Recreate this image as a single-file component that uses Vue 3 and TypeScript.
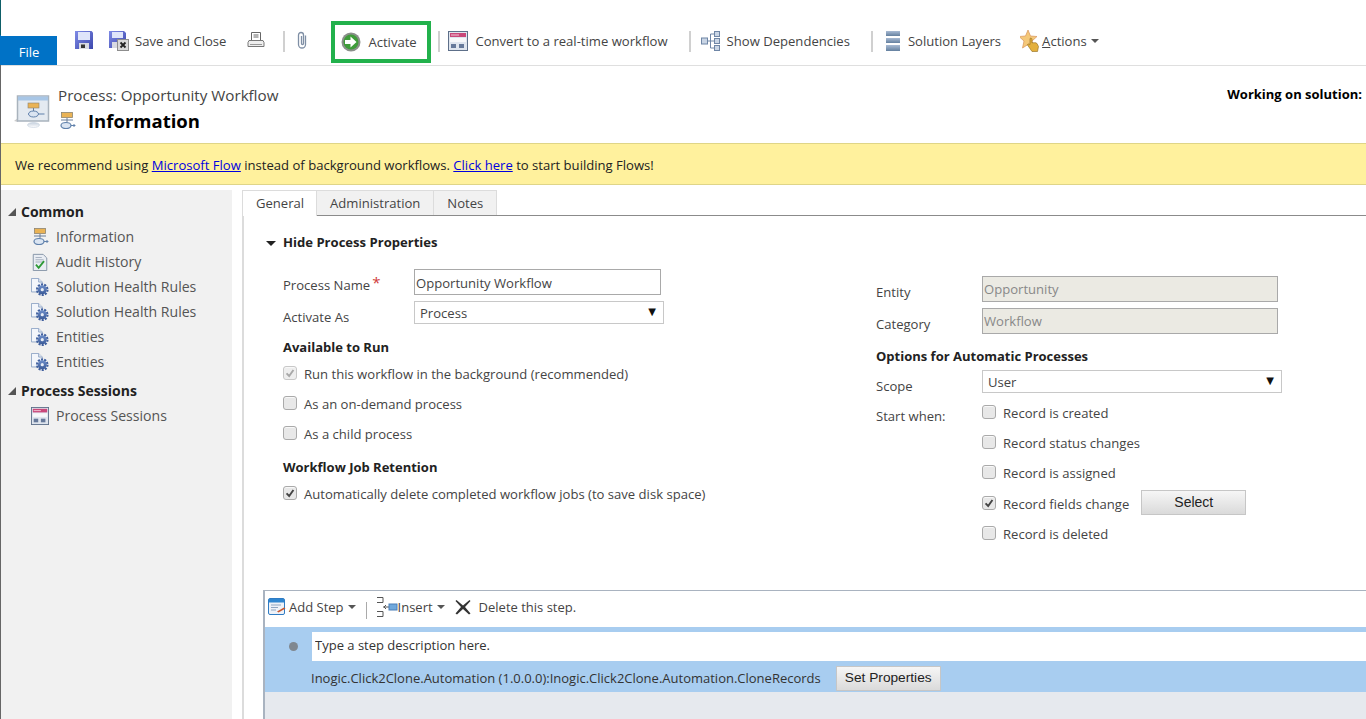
<template>
  <div class="app">
    <svg class="defs" aria-hidden="true">
      <defs>
        <linearGradient id="floppy" x1="0" y1="0" x2="1" y2="1">
          <stop offset="0" stop-color="#7f8be6" />
          <stop offset="1" stop-color="#3c47ad" />
        </linearGradient>
        <linearGradient id="bar" x1="0" y1="0" x2="0" y2="1">
          <stop offset="0" stop-color="#a9bbd4" />
          <stop offset="1" stop-color="#64809f" />
        </linearGradient>
        <linearGradient id="gearfill" x1="0" y1="0" x2="0" y2="1">
          <stop offset="0" stop-color="#6f8fca" />
          <stop offset="1" stop-color="#3a5a98" />
        </linearGradient>
        <linearGradient id="fade" x1="0" y1="0" x2="0" y2="1">
          <stop offset="0" stop-color="#c5d0dd" />
          <stop offset="1" stop-color="#fff" />
        </linearGradient>
        <symbol id="i-save" viewBox="0 0 18 18">
          <path d="M0 0h16.500L18 1.500V18H0z" fill="url(#floppy)" />
          <rect x="3" y="1" width="12" height="8" fill="#dfe5fa" />
          <rect x="4" y="12" width="10" height="6" fill="#d8dae2" />
          <rect x="6" y="13.500" width="4" height="3.500" fill="#333" />
        </symbol>
        <symbol id="i-saveclose" viewBox="0 0 20 20">
          <path d="M0 0h15l2 2v15H0z" fill="url(#floppy)" />
          <rect x="3" y="1" width="11" height="6" fill="#dfe5fa" />
          <rect x="3" y="11" width="7" height="6" fill="#d8dae2" />
          <rect x="8.500" y="8.500" width="11" height="11" fill="#d9d9d9" stroke="#8d8d8d" />
          <path d="M11.500 11.500l5 5M16.500 11.500l-5 5" stroke="#222" stroke-width="1.800" />
        </symbol>
        <symbol id="i-print" viewBox="0 0 18 18">
          <path d="M4.500 1.500h9v8h-9z" fill="#fff" stroke="#666" />
          <path d="M6.500 4h5M6.500 6h5" stroke="#666" />
          <path d="M2 9.500h14l1 2v4H1v-4z" fill="#eee" stroke="#777" />
          <path d="M3 13.500h12" stroke="#999" />
        </symbol>
        <symbol id="i-clip" viewBox="0 0 12 18">
          <path d="M9.500 4.500v9a3.500 3.500 0 0 1-7 0V4a2.500 2.500 0 0 1 5 0v8.500a1 1 0 0 1-2 0V5" fill="none" stroke="#7f8fa5" stroke-width="1.300" />
        </symbol>
        <symbol id="i-activate" viewBox="0 0 20 20">
          <circle cx="10" cy="10" r="9.500" fill="#8a8f8a" />
          <circle cx="10" cy="10" r="7.500" fill="#3f9c3a" />
          <path d="M4 8h5.500V4.500L15.500 10l-6 5.500V12H4z" fill="#fff" />
        </symbol>
        <symbol id="i-form" viewBox="0 0 20 20">
          <rect x=".5" y=".5" width="19" height="19" fill="#dfe5ee" stroke="#5d6f89" />
          <rect x="2" y="2" width="16" height="4" fill="#c9487a" />
          <path d="M3 4h8" stroke="#f2c7d6" />
          <rect x="2" y="7" width="16" height="4" fill="#f7f8fa" />
          <rect x="3" y="13" width="5" height="4" fill="#66799a" />
          <rect x="11" y="13" width="5" height="4" fill="#66799a" />
        </symbol>
        <symbol id="i-deps" viewBox="0 0 20 20">
          <g fill="#c9d5e5" stroke="#6f86a6">
            <rect x=".5" y="7" width="6" height="6" />
            <rect x="13.500" y=".5" width="5" height="5" />
            <rect x="13.500" y="7.500" width="5" height="5" />
            <rect x="13.500" y="14.500" width="5" height="5" />
          </g>
          <path d="M6.500 10h7M9.500 3v14M9.500 3h4M9.500 17h4" fill="none" stroke="#6f86a6" />
        </symbol>
        <symbol id="i-layers" viewBox="0 0 14 20">
          <rect width="14" height="5" fill="url(#bar)" />
          <rect y="7" width="14" height="5" fill="url(#bar)" />
          <rect y="14" width="14" height="6" fill="url(#bar)" />
        </symbol>
        <symbol id="i-actions" viewBox="0 0 22 22">
          <path d="M8 0l2.500 6 6.500.5-5 4.500 1.500 7L8 14.500 2.500 18 4 11-1 6.500 5.500 6z" fill="#f4c879" stroke="#d9935a" stroke-width=".7" />
          <path d="M10 8.500c1-1 2 0 2 1V13l1-.5 1 .5 1-.5 2 1 1.500 3-1 5H12l-4.500-6.500c0-1 1-1.500 2.500-.5z" fill="#e3b03d" stroke="#8e6a1d" stroke-width=".6" />
        </symbol>
        <symbol id="i-process" viewBox="0 0 18 18">
          <rect x="3.500" y=".5" width="11" height="5" fill="#eab355" stroke="#8d8471" stroke-width=".8" />
          <path d="M9 6v4M3 8h12" stroke="#6b7f99" />
          <ellipse cx="8" cy="13.500" rx="5" ry="3" fill="#dbe5f2" stroke="#5f80ab" stroke-width="1.200" />
          <path d="M13 13.500h4M15.500 12l1.500 1.500-1.500 1.500" fill="none" stroke="#5f80ab" />
        </symbol>
        <symbol id="i-audit" viewBox="0 0 16 20">
          <path d="M.5 1.500h11l4 4v14H.5z" fill="#e9edf3" stroke="#7f8ea3" />
          <path d="M3 5h7M3 7.500h9M3 10h9" stroke="#a2adbc" />
          <path d="M3.500 13l3 3.500 6-7.500" fill="none" stroke="#2d9a35" stroke-width="2" />
        </symbol>
        <symbol id="i-gear" viewBox="0 0 20 20">
          <path d="M.5.500h8l4 4v11H.5z" fill="#f3f6fb" stroke="#8ca3c4" />
          <path d="M8.500.500v4h4" fill="#dfe6f1" stroke="#8ca3c4" />
          <circle cx="12.500" cy="13" r="5.800" fill="none" stroke="#3f5f9e" stroke-width="2.400" stroke-dasharray="2.300 1.300" />
          <circle cx="12.500" cy="13" r="5" fill="url(#gearfill)" />
          <circle cx="12.500" cy="13" r="1.800" fill="#e7ecf5" />
        </symbol>
        <symbol id="i-addstep" viewBox="0 0 18 18">
          <rect x=".5" y=".5" width="16" height="16" rx="1.500" fill="#eef2f8" stroke="#2f7cc4" />
          <rect x="1" y="1" width="15" height="3.500" fill="#2f86d0" />
          <path d="M3 7h10M3 9.500h7M3 12h5" stroke="#8fa6c2" />
          <path d="M9 13.500l7-4 1.500 1-7 4z" fill="#c9562c" />
        </symbol>
        <symbol id="i-insert" viewBox="0 0 22 22">
          <path d="M1 1.500h6v5H1M1 15.500h6v5H1" fill="none" stroke="#555" />
          <path d="M7 11h6M10 9l-2 2 2 2" fill="none" stroke="#555" />
          <rect x="13" y="8" width="8" height="6" fill="#6fa8dc" stroke="#4b7fb8" />
        </symbol>
        <symbol id="i-delete" viewBox="0 0 16 16">
          <path d="M1.500 1l6.500 5.500L14.500 1l1 1L10 8l5.500 6.500-1.500 1L8 10l-6 5.500-1.500-1L6 8 .5 2z" fill="#333" />
        </symbol>
      </defs>
    </svg>

    <header class="ribbon">
      <div class="file-tab">File</div>
      <div class="tools">
        <svg class="ic save"><use href="#i-save" /></svg>
        <div class="tool saveclose"><svg class="ic s20"><use href="#i-saveclose" /></svg><span>Save and Close</span></div>
        <svg class="ic print"><use href="#i-print" /></svg>
        <span class="sep sep-a"></span>
        <svg class="ic clip"><use href="#i-clip" /></svg>
        <div class="tool activate"><svg class="ic s20"><use href="#i-activate" /></svg><span>Activate</span></div>
        <span class="sep sep-b"></span>
        <div class="tool convert"><svg class="ic s20"><use href="#i-form" /></svg><span>Convert to a real-time workflow</span></div>
        <span class="sep sep-c"></span>
        <div class="tool deps"><svg class="ic s20"><use href="#i-deps" /></svg><span>Show Dependencies</span></div>
        <span class="sep sep-d"></span>
        <div class="tool layers"><svg class="ic layer-ic"><use href="#i-layers" /></svg><span>Solution Layers</span></div>
        <div class="tool actions"><svg class="ic action-ic"><use href="#i-actions" /></svg><span><u>A</u>ctions</span><i class="caret"></i></div>
      </div>
    </header>

    <section class="page-head">
      <svg class="big-ic" viewBox="0 0 36 36">
        <path d="M0 26l4-3v4z" fill="#ccc" />
        <rect x="3.500" y="1" width="31" height="25" fill="#e4eaf1" stroke="#a9b3bd" stroke-width="1.500" />
        <rect x="4" y="1.500" width="30" height="4" fill="#a8c6e6" />
        <rect x="14" y="8" width="11" height="5" fill="#eab355" stroke="#8d8471" stroke-width=".6" />
        <path d="M19.500 13v3" stroke="#6b7f99" />
        <ellipse cx="19.500" cy="19" rx="5" ry="3" fill="#dbe5f2" stroke="#5f80ab" />
        <path d="M24.500 19h6" stroke="#5f80ab" />
        <ellipse cx="19.500" cy="30" rx="6" ry="2.500" fill="url(#fade)" stroke="#c5d0dd" stroke-width=".6" />
      </svg>
      <div class="titles">
        <div class="crumb">Process: Opportunity Workflow</div>
        <div class="title-row">
          <svg class="ic s18"><use href="#i-process" /></svg>
          <h1>Information</h1>
        </div>
      </div>
      <div class="solution">Working on solution:</div>
    </section>

    <div class="banner">
      We recommend using <a href="#">Microsoft Flow</a> instead of background workflows. <a href="#">Click here</a> to start building Flows!
    </div>

    <main class="body">
      <nav class="sidebar">
        <template v-for="group in navGroups" :key="group.title">
          <div class="nav-title"><i class="corner"></i>{{ group.title }}</div>
          <div v-for="(item, i) in group.items" :key="i" class="nav-item">
            <svg class="ic s18"><use :href="'#' + item.icon" /></svg>
            <span>{{ item.label }}</span>
          </div>
        </template>
      </nav>

      <div class="content">
        <div class="tabs">
          <div v-for="(tab, i) in tabs" :key="tab" class="tab" :class="{ active: i === 0 }">{{ tab }}</div>
        </div>

        <div class="tab-body">
          <section class="props">
            <div class="props-head"><i class="down"></i>Hide Process Properties</div>
            <div class="props-grid">
              <div class="col-left">
                <div class="field name-field">
                  <label>Process Name<b class="req">*</b></label>
                  <input class="text-input" type="text" value="Opportunity Workflow" />
                </div>
                <div class="field select-field">
                  <label>Activate As</label>
                  <div class="select"><span>Process</span><i class="sel-arrow">▼</i></div>
                </div>
                <h4 class="run-head">Available to Run</h4>
                <div v-for="c in runChecks" :key="c.label" class="check-row">
                  <span class="cb" :class="{ disabled: c.disabled }">
                    <svg v-if="c.checked" viewBox="0 0 14 14"><path d="M3 7.500l3 3 5-7" fill="none" stroke="currentColor" stroke-width="2.200" /></svg>
                  </span>
                  {{ c.label }}
                </div>
                <h4 class="job-head">Workflow Job Retention</h4>
                <div class="check-row job-row">
                  <span class="cb"><svg viewBox="0 0 14 14"><path d="M3 7.500l3 3 5-7" fill="none" stroke="currentColor" stroke-width="2.200" /></svg></span>
                  Automatically delete completed workflow jobs (to save disk space)
                </div>
              </div>

              <div class="col-right">
                <div class="rfield">
                  <label>Entity</label>
                  <input class="text-input readonly" type="text" value="Opportunity" readonly />
                </div>
                <div class="rfield second">
                  <label>Category</label>
                  <input class="text-input readonly" type="text" value="Workflow" readonly />
                </div>
                <h4 class="auto-head">Options for Automatic Processes</h4>
                <div class="rfield scope">
                  <label>Scope</label>
                  <div class="select wide"><span>User</span><i class="sel-arrow">▼</i></div>
                </div>
                <div class="start">
                  <label>Start when:</label>
                  <div class="start-list">
                    <div v-for="c in startChecks" :key="c.label" class="check-row" :class="{ fields: c.checked }">
                      <span class="cb">
                        <svg v-if="c.checked" viewBox="0 0 14 14"><path d="M3 7.500l3 3 5-7" fill="none" stroke="currentColor" stroke-width="2.200" /></svg>
                      </span>
                      {{ c.label }}
                      <button v-if="c.checked" class="grey-btn select-btn" type="button">Select</button>
                    </div>
                  </div>
                </div>
              </div>
            </div>
          </section>

          <section class="steps">
            <div class="steps-bar">
              <svg class="ic add-ic"><use href="#i-addstep" /></svg>
              <span>Add Step</span><i class="caret"></i>
              <span class="step-sep"></span>
              <svg class="ic insert-ic"><use href="#i-insert" /></svg>
              <span>Insert</span><i class="caret"></i>
              <svg class="ic del-ic"><use href="#i-delete" /></svg>
              <span class="del-text">Delete this step.</span>
            </div>
            <div class="step-band">
              <div class="step-line">
                <i class="dot"></i>
                <input class="step-input" type="text" value="Type a step description here." />
              </div>
              <div class="step-line second">
                <span class="step-name">Inogic.Click2Clone.Automation (1.0.0.0):Inogic.Click2Clone.Automation.CloneRecords</span>
                <button class="grey-btn props-btn" type="button">Set Properties</button>
              </div>
            </div>
          </section>
        </div>
      </div>
    </main>
  </div>
</template>

<script setup lang="ts">
interface NavItem { icon: string; label: string }

const navGroups: { title: string; items: NavItem[] }[] = [
  {
    title: 'Common',
    items: [
      { icon: 'i-process', label: 'Information' },
      { icon: 'i-audit', label: 'Audit History' },
      { icon: 'i-gear', label: 'Solution Health Rules' },
      { icon: 'i-gear', label: 'Solution Health Rules' },
      { icon: 'i-gear', label: 'Entities' },
      { icon: 'i-gear', label: 'Entities' },
    ],
  },
  {
    title: 'Process Sessions',
    items: [{ icon: 'i-form', label: 'Process Sessions' }],
  },
];

const tabs = ['General', 'Administration', 'Notes'];

const runChecks = [
  { label: 'Run this workflow in the background (recommended)', checked: true, disabled: true },
  { label: 'As an on-demand process', checked: false, disabled: false },
  { label: 'As a child process', checked: false, disabled: false },
];

const startChecks = [
  { label: 'Record is created', checked: false },
  { label: 'Record status changes', checked: false },
  { label: 'Record is assigned', checked: false },
  { label: 'Record fields change', checked: true },
  { label: 'Record is deleted', checked: false },
];
</script>

<style>
html, body { margin: 0; overflow: hidden; background: #fff; }
</style>

<style scoped>
.app {
  width: 1366px;
  height: 719px;
  box-sizing: border-box;
  overflow: hidden;
  border-left: 1px solid #666;
  border-image: linear-gradient(#0e5f68 0, #0e5f68 36px, #0072c6 36px, #0072c6 66px, #666 66px) 1;
  font-family: "Open Sans", "Noto Sans", sans-serif;
  font-size: 13.08px;
  color: #444;
  background: #fff;
}
.defs { position: absolute; width: 0; height: 0; }
.ic { display: block; flex: none; overflow: visible; }
.s18 { width: 18px; height: 18px; }
.s20 { width: 20px; height: 20px; }

.ribbon {
  display: flex;
  height: 65px;
  border-bottom: 1px solid #dfdfdf;
}
.file-tab {
  align-self: flex-end;
  box-sizing: border-box;
  width: 56px;
  height: 29px;
  background: #0072c6;
  color: #fff;
  text-align: center;
  line-height: 32px;
}
.tools {
  display: flex;
  align-items: center;
  height: 40px;
  margin-top: 21px;
  white-space: nowrap;
}
.tool { display: flex; align-items: center; }
.save { width: 18px; height: 18px; margin-left: 18px; margin-top: -3px; }
.saveclose { margin-left: 16px; gap: 6px; }
.print { width: 18px; height: 18px; margin-left: 21px; margin-top: -2px; }
.sep { width: 2px; height: 21px; background: #d0d0d0; flex: none; }
.sep-a { margin-left: 18px; }
.clip { width: 12px; height: 18px; margin-left: 11px; margin-top: -2px; }
.activate {
  box-sizing: border-box;
  align-self: flex-start;
  width: 100px;
  height: 42px;
  margin-left: 23px;
  padding-left: 6px;
  gap: 7px;
  border: 4px solid #22b14c;
}
.sep-b { margin-left: 7px; }
.convert { margin-left: 8px; gap: 7px; }
.sep-c { margin-left: 21px; }
.deps { margin-left: 10px; gap: 6px; }
.sep-d { margin-left: 21px; }
.layers { margin-left: 13px; gap: 8px; }
.layer-ic { width: 14px; height: 20px; }
.actions { margin-left: 19px; }
.action-ic { width: 22px; height: 22px; }
.caret {
  width: 0;
  height: 0;
  margin-left: 4px;
  border: 4px solid transparent;
  border-top-color: #555;
  border-bottom: 0;
  flex: none;
}

.page-head {
  display: flex;
  height: 77px;
}
.big-ic { width: 36px; height: 36px; margin: 29px 0 0 13px; flex: none; }
.titles { margin: 19px 0 0 8px; }
.crumb { font-size: 15.2px; line-height: 20px; color: #444; }
.title-row { display: flex; align-items: center; gap: 12px; margin-top: 3px; }
h1 { margin: 0; font-size: 18.5px; line-height: 26px; font-weight: 700; color: #000; }
.solution { margin: 18px 4px 0 auto; font-size: 13px; font-weight: 700; color: #000; line-height: 20px; }

.banner {
  box-sizing: border-box;
  height: 42px;
  padding-left: 14px;
  line-height: 42px;
  background: #fff19d;
  border-top: 1px solid #dfd588;
  border-bottom: 1px solid #dfd588;
  color: #222;
}
.banner a { color: #0000e0; }

.body {
  display: flex;
  height: 534px;
  padding-top: 5px;
  box-sizing: border-box;
}
.sidebar {
  box-sizing: border-box;
  width: 231px;
  flex: none;
  background: #f1f1f1;
  padding-top: 12px;
}
.nav-title {
  position: relative;
  height: 20px;
  padding-left: 20px;
  line-height: 20px;
  font-size: 14px;
  font-weight: 700;
  color: #222;
}
.nav-item + .nav-title { margin-top: 7px; }
.corner {
  position: absolute;
  left: 7px;
  top: 6px;
  border-left: 8px solid transparent;
  border-bottom: 8px solid #555;
}
.nav-item {
  display: flex;
  align-items: center;
  gap: 7px;
  height: 25px;
  padding-left: 30px;
  font-size: 14.1px;
  color: #555;
}
.nav-title + .nav-item { margin-top: 2px; }

.content {
  flex: 1;
  min-width: 0;
  margin-left: 10px;
  display: flex;
  flex-direction: column;
}
.tabs {
  display: flex;
  flex: none;
  height: 25px;
  border-bottom: 1px solid #8b8b8b;
}
.tab {
  box-sizing: border-box;
  height: 25px;
  padding: 0 13px;
  line-height: 25px;
  background: #f1f1f1;
  border: 1px solid #dcdcdc;
  border-bottom: 0;
  border-left: 0;
  color: #444;
}
.tab.active {
  height: 26px;
  width: 75px;
  background: #fff;
  border-left: 1px solid #dcdcdc;
  padding: 0 13px;
}
.tab-body {
  flex: 1;
  min-height: 0;
  display: flex;
  flex-direction: column;
  border-left: 2px solid #dcdcdc;
}

.props {
  box-sizing: border-box;
  height: 374px;
  flex: none;
  position: relative;
}
.props-head {
  display: flex;
  align-items: center;
  height: 20px;
  margin-top: 16px;
  padding-left: 39px;
  font-weight: 700;
  color: #222;
}
.down {
  position: absolute;
  left: 22px;
  top: 25px;
  border: 5px solid transparent;
  border-top-color: #222;
  border-bottom: 0;
}
.props-grid {
  display: grid;
  grid-template-columns: 593px 1fr;
  padding-left: 39px;
}
.col-left { padding-top: 17px; }
.col-right { padding-top: 24px; }
label { display: block; }
.field { display: grid; grid-template-columns: 131px auto; justify-content: start; }
.name-field { height: 26px; }
.name-field label { padding-top: 6px; line-height: 20px; }
.select-field { margin-top: 6px; height: 23px; }
.select-field label { padding-top: 6px; line-height: 20px; }
.req { color: #d03a3a; font-size: 15px; line-height: 10px; margin-left: 2px; vertical-align: 2px; font-weight: 400; }
.text-input {
  box-sizing: border-box;
  width: 247px;
  height: 26px;
  padding: 1px 1px 0 1px;
  border: 1px solid #a9a9a9;
  font: inherit;
  color: #444;
  background: #fff;
  outline: none;
}
.text-input.readonly {
  width: 296px;
  padding: 0 1px;
  background: #ebeae3;
  color: #888;
}
.select {
  box-sizing: border-box;
  display: flex;
  align-items: center;
  justify-content: space-between;
  width: 250px;
  height: 23px;
  padding: 1px 7px 0 5px;
  border: 1px solid #c8c8c8;
  color: #444;
}
.select.wide { width: 300px; }
.sel-arrow { font-style: normal; font-size: 10px; color: #111; font-family: "DejaVu Sans", sans-serif; margin-top: -3px; }
h4 { margin: 0; font-size: 13px; line-height: 20px; font-weight: 700; color: #222; }
.run-head { margin-top: 13px; }
.job-head { margin-top: 8px; }
.auto-head { margin-top: 12px; }
.check-row {
  display: flex;
  align-items: center;
  height: 30px;
  color: #444;
  white-space: nowrap;
}
.run-head + .check-row { margin-top: 2px; }
.job-row { margin-top: 2px; }
.cb {
  box-sizing: border-box;
  width: 14px;
  height: 14px;
  margin: -3px 7px 0 0;
  border: 1px solid #aaa;
  border-radius: 3px;
  background: #e8e8e8;
  color: #444;
  box-shadow: inset 0 1px 0 #f8f8f8;
  flex: none;
}
.cb svg { display: block; width: 12px; height: 12px; }
.cb.disabled { color: #a8a8a8; border-color: #c8c8c8; background: #eee; }
.rfield { display: grid; grid-template-columns: 106px auto; justify-content: start; }
.rfield label { padding-top: 6px; line-height: 20px; }
.rfield.second { margin-top: 6px; }
.scope { margin-top: 4px; height: 23px; }
.scope label { padding-top: 6px; }
.start { display: grid; grid-template-columns: 106px auto; justify-content: start; margin-top: 5px; }
.start label { padding-top: 8px; line-height: 20px; }
.check-row.fields { margin-top: 1px; }
.grey-btn {
  box-sizing: border-box;
  padding: 0 0 2px;
  border: 1px solid #c6c6c6;
  background: linear-gradient(#f6f6f6, #dadada);
  font-family: "Liberation Sans", Arial, sans-serif;
  font-size: 14px;
  color: #222;
}
.select-btn { width: 105px; height: 25px; margin-left: 12px; margin-top: -3px; }

.steps {
  flex: 1;
  display: flex;
  flex-direction: column;
  margin-left: 19px;
  border-top: 1px solid #a9b3c0;
  border-left: 2px solid #a9b3c0;
  background: #e6e9ee;
  font-size: 13px;
}
.steps-bar {
  display: flex;
  align-items: center;
  box-sizing: border-box;
  height: 36px;
  padding: 0 0 5px 3px;
  background: #fff;
  white-space: nowrap;
}
.add-ic { width: 18px; height: 18px; margin-right: 3px; }
.step-sep { width: 1px; height: 17px; margin: 8px 9px 0 10px; background: #aaa; }
.insert-ic { width: 22px; height: 22px; }
.del-ic { width: 16px; height: 16px; margin-left: 10px; margin-right: 8px; }
.step-band {
  box-sizing: border-box;
  height: 65px;
  background: #a8cdf0;
  padding-top: 5px;
}
.step-line { display: flex; align-items: center; }
.dot { width: 9px; height: 9px; margin: 0 14px 0 24px; border-radius: 50%; background: #808890; flex: none; }
.step-input {
  box-sizing: border-box;
  flex: 1;
  min-width: 0;
  height: 29px;
  padding: 0 3px 3px;
  border: 0;
  font: inherit;
  color: #333;
  outline: none;
}
.step-line.second { margin-top: 5px; padding-left: 46px; color: #333; }
.step-name { white-space: nowrap; padding-bottom: 2px; }
.props-btn { width: 105px; height: 25px; margin-left: 15px; font-size: 13.7px; }
</style>
